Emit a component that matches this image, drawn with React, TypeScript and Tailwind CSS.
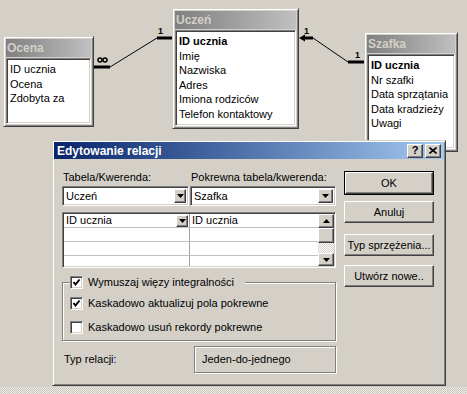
const raised =
  'border border-t-white border-l-white border-r-[#404040] border-b-[#404040] shadow-[inset_-1px_-1px_0_#808080] bg-[#d4d0c8]';
const sunken =
  'border border-t-[#808080] border-l-[#808080] border-r-white border-b-white shadow-[inset_1px_1px_0_#404040,inset_-1px_-1px_0_#d4d0c8]';
const frame =
  'border border-t-[#d4d0c8] border-l-[#d4d0c8] border-r-[#404040] border-b-[#404040] shadow-[inset_1px_1px_0_#fff,inset_-1px_-1px_0_#808080] bg-[#d4d0c8]';

const Tri = ({ up }: { up?: boolean }) => (
  <svg width="7" height="4" viewBox="0 0 7 4">
    <polygon points={up ? '0,4 7,4 3.5,0' : '0,0 7,0 3.5,4'} fill="#000" />
  </svg>
);

const TableWin = ({
  title,
  items,
  keyFirst = true,
  className,
}: {
  title: string;
  items: string[];
  keyFirst?: boolean;
  className: string;
}) => (
  <div className={`absolute flex flex-col p-[2px] ${frame} ${className}`}>
    <div className="h-[18px] shrink-0 bg-linear-to-r from-[#808080] to-[#c0c0c0] pl-[1px] text-[12px] font-bold leading-[18px] text-[#d4d0c8]">
      {title}
    </div>
    <div className={`mt-[1px] flex-1 bg-white p-[1px] pl-[3px] pt-[3px] text-[11px] leading-[14.6px] text-black ${sunken}`}>
      {items.map((it, i) => (
        <div key={i} className={keyFirst && i === 0 ? 'font-bold' : ''}>
          {it}
        </div>
      ))}
    </div>
  </div>
);

const Check = ({ on }: { on?: boolean }) => (
  <div className={`flex h-[13px] w-[13px] shrink-0 items-center justify-center bg-white ${sunken}`}>
    {on && (
      <svg width="9" height="9" viewBox="0 0 9 9">
        <polyline points="1.5,4 3.5,6.5 7.5,1.5" fill="none" stroke="#000" strokeWidth="2" />
      </svg>
    )}
  </div>
);

const Btn = ({ children, className = '' }: { children: React.ReactNode; className?: string }) => (
  <div className={`flex h-[22px] items-center justify-center text-[11px] text-black ${raised} ${className}`}>
    {children}
  </div>
);

export default function App() {
  return (
    <div className="flex h-[394px] w-[467px] flex-col overflow-hidden bg-[#d4d0c8] font-['Liberation_Sans',Arial,sans-serif]">
      <div className="relative h-[387px] shrink-0">
        <TableWin
          title="Ocena"
          items={['ID ucznia', 'Ocena', 'Zdobyta za']}
          keyFirst={false}
          className="left-[3px] top-[36px] h-[91px] w-[91px]"
        />
        <TableWin
          title="Uczeń"
          items={['ID ucznia', 'Imię', 'Nazwiska', 'Adres', 'Imiona rodziców', 'Telefon kontaktowy']}
          className="left-[172px] top-[8px] h-[121px] w-[127px]"
        />
        <TableWin
          title="Szafka"
          items={['ID ucznia', 'Nr szafki', 'Data sprzątania', 'Data kradzieży', 'Uwagi']}
          className="left-[364px] top-[32px] h-[120px] w-[94px]"
        />

        {/* relacje */}
        <svg className="pointer-events-none absolute inset-0" width="467" height="387">
          <line x1="94" y1="67" x2="110" y2="67" stroke="#000" strokeWidth="3" />
          <line x1="110" y1="67" x2="157" y2="38" stroke="#000" strokeWidth="1" />
          <line x1="157" y1="38" x2="172" y2="38" stroke="#000" strokeWidth="3" />
          <circle cx="100" cy="60" r="2" fill="none" stroke="#000" strokeWidth="1.5" />
          <circle cx="105" cy="60" r="2" fill="none" stroke="#000" strokeWidth="1.5" />
          <text x="158" y="34" fontSize="9" fontWeight="bold" fontFamily="Liberation Sans, sans-serif">1</text>

          <polygon points="299,38 305,34.5 305,41.5" fill="#000" />
          <line x1="303" y1="38" x2="313" y2="38" stroke="#000" strokeWidth="3" />
          <line x1="313" y1="38" x2="348" y2="62" stroke="#000" strokeWidth="1" />
          <line x1="348" y1="62" x2="364" y2="62" stroke="#000" strokeWidth="3" />
          <text x="304" y="34" fontSize="9" fontWeight="bold" fontFamily="Liberation Sans, sans-serif">1</text>
          <text x="355" y="58" fontSize="9" fontWeight="bold" fontFamily="Liberation Sans, sans-serif">1</text>
        </svg>

        {/* dialog */}
        <div className={`absolute left-[52px] top-[140px] flex h-[246px] w-[394px] flex-col p-[1px] ${frame}`}>
          <div className="flex h-[17px] shrink-0 items-center justify-between bg-linear-to-r from-[#0a246a] to-[#a6caf0] pl-[3px] pr-[3px]">
            <span className="text-[12px] font-bold text-white">Edytowanie relacji</span>
            <div className="flex gap-[2px]">
              <div className={`flex h-[14px] w-[16px] items-center justify-center text-[11px] font-bold leading-none text-black ${raised}`}>?</div>
              <div className={`flex h-[14px] w-[16px] items-center justify-center ${raised}`}>
                <svg width="8" height="7" viewBox="0 0 8 7">
                  <path d="M0.5 0.5 L7.5 6.5 M7.5 0.5 L0.5 6.5" stroke="#000" strokeWidth="1.6" />
                </svg>
              </div>
            </div>
          </div>

          <div className="flex gap-[8px] pl-[8px] pt-[12px] text-[11px] text-black">
            <div className="flex w-[274px] flex-col">
              <div className="flex h-[13px] leading-[13px]">
                <div className="w-[128px] pl-[1px]">Tabela/Kwerenda:</div>
                <div className="pl-[1px]">Pokrewna tabela/kwerenda:</div>
              </div>

              <div className="mt-[2px] flex h-[20px] gap-[1px]">
                <div className={`flex w-[127px] items-center bg-white p-[2px] pl-[3px] ${sunken}`}>
                  <span className="flex-1">Uczeń</span>
                  <div className={`flex h-full w-[12px] items-center justify-center ${raised}`}>
                    <Tri />
                  </div>
                </div>
                <div className={`flex flex-1 items-center bg-white p-[2px] pl-[3px] ${sunken}`}>
                  <span className="flex-1">Szafka</span>
                  <div className={`flex h-full w-[15px] items-center justify-center ${raised}`}>
                    <Tri />
                  </div>
                </div>
              </div>

              <div className={`mt-[6px] flex h-[56px] bg-white p-[1px] ${sunken}`}>
                <div className="flex flex-1 flex-col">
                  {[0, 1, 2, 3].map((r) => (
                    <div key={r} className={`flex ${r < 3 ? 'h-[14px] border-b border-[#c0c0c0]' : 'flex-1'}`}>
                      <div className="flex w-[126px] items-center border-r border-[#a0a0a0] pl-[2px]">
                        {r === 0 && (
                          <>
                            <span className="flex-1">ID ucznia</span>
                            <div className={`mr-[1px] flex h-[12px] w-[12px] items-center justify-center ${raised}`}>
                              <Tri />
                            </div>
                          </>
                        )}
                      </div>
                      <div className="flex flex-1 items-center pl-[2px]">{r === 0 && 'ID ucznia'}</div>
                    </div>
                  ))}
                </div>
                <div className="flex w-[16px] flex-col">
                  <div className={`flex h-[14px] items-center justify-center ${raised}`}>
                    <Tri up />
                  </div>
                  <div className={`h-[15px] ${raised}`} />
                  <div className="flex-1 bg-[repeating-conic-gradient(#d4d0c8_0_25%,#ffffff_0_50%)] bg-[length:2px_2px]" />
                  <div className={`flex h-[13px] items-center justify-center ${raised}`}>
                    <Tri />
                  </div>
                </div>
              </div>

              <fieldset className="mt-[8px] h-[65px] border border-[#808080] pl-[7px] shadow-[inset_1px_1px_0_#fff,1px_1px_0_#fff]">
                <legend className="flex items-center gap-[5px] bg-[#d4d0c8] pr-[11px]">
                  <Check on />
                  <span className="leading-[13px]">Wymuszaj więzy integralności</span>
                </legend>
                <div className="mt-[8px] flex h-[13px] items-center gap-[5px]">
                  <Check on />
                  <span>Kaskadowo aktualizuj pola pokrewne</span>
                </div>
                <div className="mt-[11px] flex h-[13px] items-center gap-[5px]">
                  <Check />
                  <span>Kaskadowo usuń rekordy pokrewne</span>
                </div>
              </fieldset>

              <div className="mt-[5px] flex h-[27px] items-center">
                <div className="w-[132px] pl-[2px]">Typ relacji:</div>
                <div className="flex h-full flex-1 items-center border border-[#808080] pl-[7px] shadow-[inset_1px_1px_0_#fff,1px_1px_0_#fff]">
                  Jeden-do-jednego
                </div>
              </div>
            </div>

            <div className="flex w-[90px] flex-col">
              <div className="border border-black">
                <Btn className="h-[20px]">OK</Btn>
              </div>
              <Btn className="mt-[6px]">Anuluj</Btn>
              <Btn className="mt-[11px]">Typ sprzężenia...</Btn>
              <Btn className="mt-[9px]">Utwórz nowe..</Btn>
            </div>
          </div>
        </div>
      </div>
      <div className="h-[7px] bg-[repeating-conic-gradient(#c8c4bc_0_25%,#f0ede8_0_50%)] bg-[length:2px_2px]" />
    </div>
  );
}
